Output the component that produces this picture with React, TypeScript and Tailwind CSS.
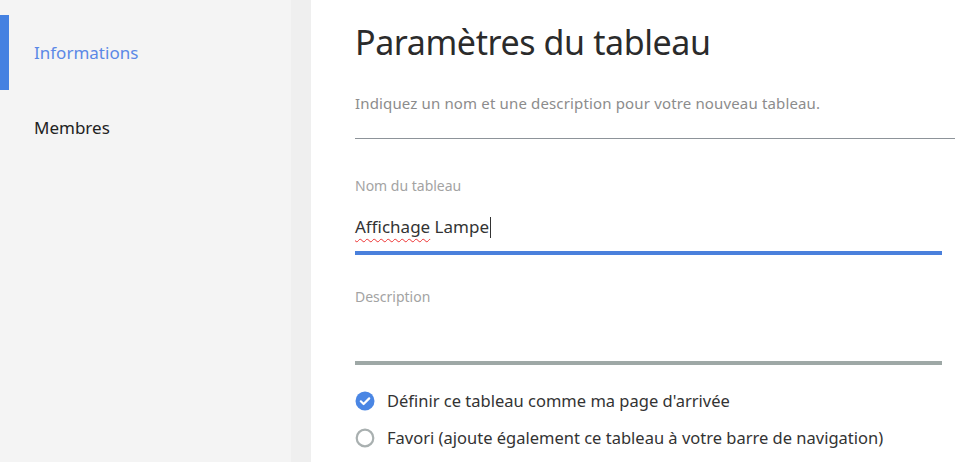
import { useState } from "react";

const font = { fontFamily: '"Noto Sans", "Open Sans", Arial, sans-serif' };

function CheckIcon({ checked }: { checked: boolean }) {
  if (checked) {
    return (
      <svg width="20" height="20" viewBox="0 0 20 20" className="shrink-0">
        <circle cx="10" cy="10" r="9.5" fill="#4a86e4" />
        <path d="M5.8 10.3l2.8 2.7 5.6-5.6" fill="none" stroke="#fff" strokeWidth="2.2" strokeLinecap="round" strokeLinejoin="round" />
      </svg>
    );
  }
  return (
    <svg width="20" height="20" viewBox="0 0 20 20" className="shrink-0">
      <circle cx="10" cy="10" r="8.3" fill="none" stroke="#a9b0b0" strokeWidth="2.2" />
    </svg>
  );
}

export default function App() {
  const [home, setHome] = useState(true);
  const [fav, setFav] = useState(false);

  return (
    <div className="flex h-[462px] w-[971px] overflow-hidden bg-white" style={font}>
      <aside className="flex w-[311px] shrink-0">
        <nav className="w-[291px] bg-[#f4f4f4] pt-[15px]">
          <div className="flex h-[75px] items-center border-l-[9px] border-[#4581e1] pl-[25px] text-[17px] text-[#5b88e6]">
            Informations
          </div>
          <div className="flex h-[75px] items-center pl-[34px] text-[17px] text-[#222]">Membres</div>
        </nav>
        <div className="w-[20px] bg-[#efefef]" />
      </aside>

      <main className="flex-1 pl-[44px] pr-[16px]">
        <h1 className="mt-[20px] text-[34px] leading-[44px] font-normal tracking-[-0.4px] text-[#2b2b2b]">
          Paramètres du tableau
        </h1>
        <p className="mt-[29px] text-[15px] leading-[20px] tracking-[0.15px] text-[#8c8c8c]">
          Indiquez un nom et une description pour votre nouveau tableau.
        </p>
        <div className="mt-[25px] h-px bg-[#8d9399]" />

        <div className="mr-[13px]">
          <label className="mt-[37px] block text-[14px] leading-[20px] text-[#a3a3a3]">Nom du tableau</label>
          <div className="mt-[19px] flex h-[24px] items-center text-[17px] text-[#333]">
            <span className="underline decoration-wavy decoration-[#e33] decoration-1 underline-offset-[5px]">Affichage</span>
            <span className="whitespace-pre"> Lampe</span>
            <span className="ml-px h-[21px] w-px bg-[#333]" />
          </div>
          <div className="mt-[12px] h-[4px] bg-[#4a80dc]" />

          <label className="mt-[32px] block text-[14px] leading-[20px] text-[#a3a3a3]">Description</label>
          <div className="h-[54px]" />
          <div className="h-[4px] bg-[#9ea8a6]" />
        </div>

        <div className="mt-[26px] flex flex-col gap-[17px]">
          <button onClick={() => setHome(!home)} className="flex items-center gap-[12px] text-left text-[16.5px] leading-[20px] text-[#333]">
            <CheckIcon checked={home} />
            Définir ce tableau comme ma page d'arrivée
          </button>
          <button onClick={() => setFav(!fav)} className="flex items-center gap-[12px] text-left text-[16.5px] leading-[20px] text-[#333]">
            <CheckIcon checked={fav} />
            Favori (ajoute également ce tableau à votre barre de navigation)
          </button>
        </div>
      </main>
    </div>
  );
}
